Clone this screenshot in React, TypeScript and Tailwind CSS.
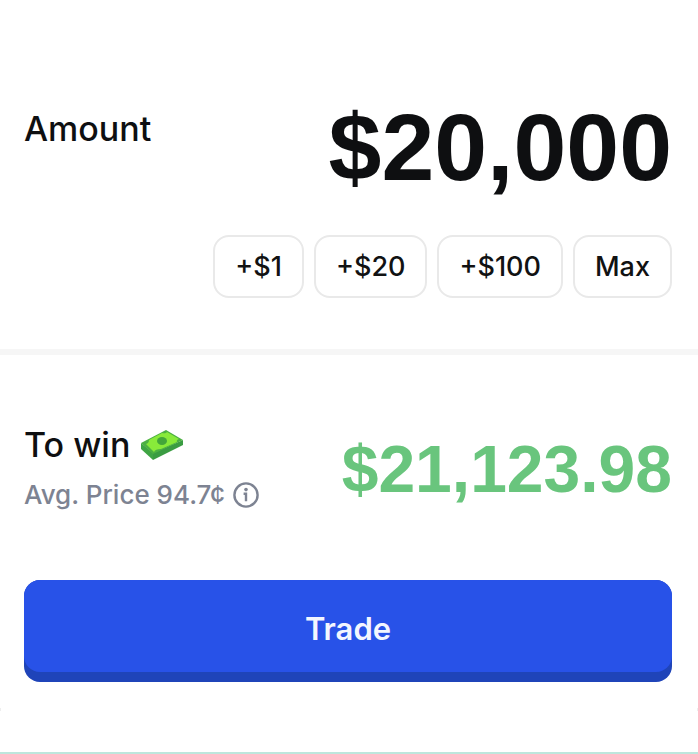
import { useState } from "react";

const presets = [
  { label: "+$1", add: 1 },
  { label: "+$20", add: 20 },
  { label: "+$100", add: 100 },
];

function CashIcon() {
  return (
    <svg width="44" height="32" viewBox="0 0 44 32" aria-hidden="true">
      <path d="M1 14 L13 24 L13 31 L1 20 Z" fill="#3fa544" />
      <path d="M13 24 L43 11 L43 16 L13 31 Z" fill="#3a9c42" />
      <path d="M1 14 L26 1 L43 11 L13 25 Z" fill="#4cb042" />
      <path
        d="M6 15 Q9 14 9 11 L22 4 Q26 5 27 3 L39 10 Q36 11 37 13 L21 20 Q15 20 14 23 Z"
        fill="#88ea3a"
      />
      <ellipse cx="22" cy="12" rx="5" ry="4" fill="#43a63a" />
    </svg>
  );
}

function InfoIcon() {
  return (
    <svg width="26" height="26" viewBox="0 0 26 26" fill="none" aria-hidden="true">
      <circle cx="13" cy="13" r="11.6" stroke="#7d8392" strokeWidth="2.4" />
      <circle cx="13" cy="7.6" r="1.8" fill="#7d8392" />
      <path d="M10.6 11.8H13V19.2" stroke="#7d8392" strokeWidth="2.4" />
    </svg>
  );
}

export default function App() {
  const [amount, setAmount] = useState(20000);
  const pill =
    "h-[63px] rounded-2xl border-2 border-[#e9e9e9] px-5 pt-[2px] text-[27px] font-medium text-[#111213]";

  return (
    <main className="bg-white font-['Inter',sans-serif] text-[#0e0f11]">
      <section className="pt-[98px] pr-[26px] pb-[51px] pl-6">
        <div className="flex items-start justify-between">
          <label htmlFor="amount" className="pt-[9px] text-[34px] leading-[44px] font-medium">
            Amount
          </label>
          <input
            id="amount"
            type="text"
            inputMode="numeric"
            className="h-[98px] w-0 min-w-0 flex-1 bg-transparent text-right font-['Liberation_Sans',sans-serif] text-[95px] leading-[98px] font-bold outline-none"
            value={"$" + amount.toLocaleString("en-US")}
            onChange={(e) => setAmount(Number(e.target.value.replace(/\D/g, "")))}
          />
        </div>
        <div className="mt-[39px] flex justify-end gap-[10px]">
          {presets.map((p) => (
            <button key={p.label} type="button" className={pill} onClick={() => setAmount(amount + p.add)}>
              {p.label}
            </button>
          ))}
          <button type="button" className={pill} onClick={() => setAmount(20000)}>
            Max
          </button>
        </div>
      </section>

      <hr className="h-[6px] border-0 bg-[#f6f6f6]" />

      <section className="pt-[68px] pr-[26px] pl-6">
        <div className="flex items-center justify-between">
          <div>
            <div className="flex items-center gap-[10px] text-[34px] leading-[44px] font-medium">
              To win
              <CashIcon />
            </div>
            <div className="mt-2 flex items-center gap-2 text-[26px] leading-[40px] font-medium text-[#7d8392]">
              Avg. Price 94.7¢
              <button type="button" aria-label="About the average price">
                <InfoIcon />
              </button>
            </div>
          </div>
          <output
            htmlFor="amount"
            className="font-['Liberation_Sans',sans-serif] text-[66px] leading-[80px] font-bold text-[#69c57d]"
          >
            $21,123.98
          </output>
        </div>
        <button
          type="button"
          className="mt-[65px] block w-full rounded-2xl bg-[#1f44b9] pb-[10px] text-[31px] font-semibold text-[#f3f6ff]"
        >
          <span className="block rounded-2xl bg-[#2852e8] pt-[27px] pb-[21px] leading-[44px]">Trade</span>
        </button>
      </section>

      <div className="mt-[26px] flex justify-between">
        <span className="h-[3px] w-px bg-[#eeeeee]" />
        <span className="h-[3px] w-px bg-[#eeeeee]" />
      </div>
      <div className="mt-[41px] h-[2px] bg-[#bde6dc]" />
    </main>
  );
}
